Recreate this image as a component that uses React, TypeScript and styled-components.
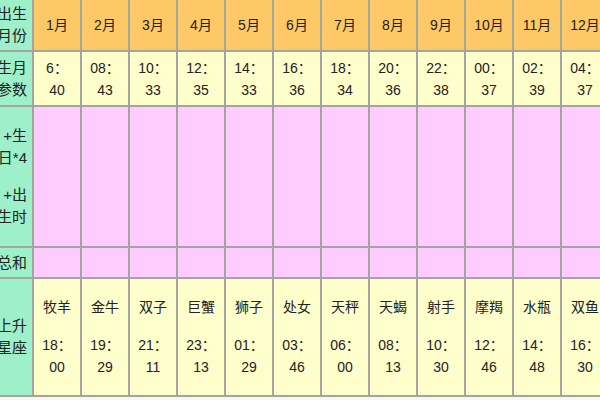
import React from "react";
import styled, { createGlobalStyle } from "styled-components";

const Global = createGlobalStyle`
  html, body {
    margin: 0;
    padding: 0;
    background: #f6f6f0;
    overflow: hidden;
  }
  body {
    width: 600px;
    height: 400px;
    font-family: "Liberation Sans", "Noto Sans CJK SC", sans-serif;
    color: #222;
  }
`;

type Tone = "head" | "label" | "data" | "fill";

const toneColor: Record<Tone, string> = {
  head: "#fdc866",
  label: "#9df0c9",
  data: "#ffffcc",
  fill: "#ffccff",
};

const Sheet = styled.div`
  display: grid;
  grid-template-columns: 32px repeat(12, 46px);
  grid-template-rows: 50px 53px 139px 29px 116px;
  gap: 2px;
  padding-bottom: 2px;
  background: #a4a4a0;
  width: max-content;
  font-size: 14px;
`;

const Cell = styled.div<{ $tone: Tone }>`
  background: ${(p) => toneColor[p.$tone]};
  display: flex;
  flex-direction: column;
  align-items: center;
  justify-content: center;
  text-align: center;
  line-height: 22px;
  white-space: nowrap;
  overflow: hidden;
`;

const LabelCell = styled.div`
  background: ${toneColor.label};
  display: flex;
  flex-direction: row;
  justify-content: flex-end;
  align-items: center;
  padding-right: 5px;
  overflow: hidden;
  font-size: 15px;
  line-height: 22px;
  white-space: nowrap;
`;

const LabelText = styled.div`
  text-align: right;
  flex-shrink: 0;
`;

const LabelGroup = styled.div`
  & + & {
    margin-top: 15px;
  }
`;

const Line = styled.div``;

const Sign = styled.div`
  margin-bottom: 16px;
`;

const months = ["1月", "2月", "3月", "4月", "5月", "6月", "7月", "8月", "9月", "10月", "11月", "12月"];
const params = [
  ["6", "40"], ["08", "43"], ["10", "33"], ["12", "35"], ["14", "33"], ["16", "36"],
  ["18", "34"], ["20", "36"], ["22", "38"], ["00", "37"], ["02", "39"], ["04", "37"],
];
const signs = ["牧羊", "金牛", "双子", "巨蟹", "狮子", "处女", "天秤", "天蝎", "射手", "摩羯", "水瓶", "双鱼"];
const rising = [
  ["18", "00"], ["19", "29"], ["21", "11"], ["23", "13"], ["01", "29"], ["03", "46"],
  ["06", "00"], ["08", "13"], ["10", "30"], ["12", "46"], ["14", "48"], ["16", "30"],
];

function Label({ groups }: { groups: string[][] }) {
  return (
    <LabelCell>
      <LabelText>
        {groups.map((g, i) => (
          <LabelGroup key={i}>
            {g.map((l) => (
              <Line key={l}>{l}</Line>
            ))}
          </LabelGroup>
        ))}
      </LabelText>
    </LabelCell>
  );
}

export default function App() {
  return (
    <>
      <Global />
      <Sheet>
        <Label groups={[["出生", "月份"]]} />
        {months.map((m) => (
          <Cell key={m} $tone="head">{m}</Cell>
        ))}

        <Label groups={[["生月", "参数"]]} />
        {params.map(([h, m], i) => (
          <Cell key={i} $tone="data">
            <Line>{h}：</Line>
            <Line>{m}</Line>
          </Cell>
        ))}

        <Label groups={[["+生", "日*4"], ["+出", "生时"]]} />
        {months.map((m) => (
          <Cell key={m} $tone="fill" />
        ))}

        <Label groups={[["总和"]]} />
        {months.map((m) => (
          <Cell key={m} $tone="fill" />
        ))}

        <Label groups={[["上升", "星座"]]} />
        {signs.map((s, i) => (
          <Cell key={s} $tone="data">
            <Sign>{s}</Sign>
            <Line>{rising[i][0]}：</Line>
            <Line>{rising[i][1]}</Line>
          </Cell>
        ))}
      </Sheet>
    </>
  );
}
